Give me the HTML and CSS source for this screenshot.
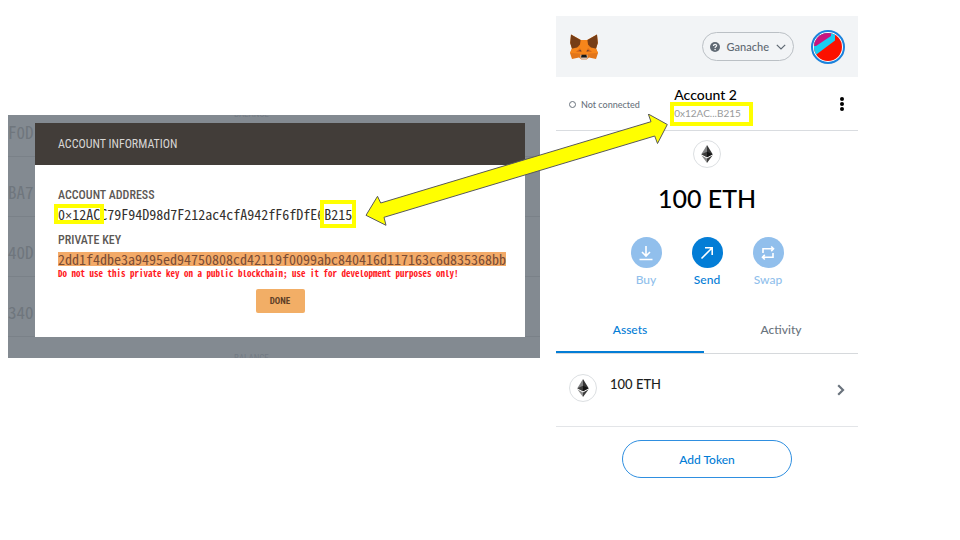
FILE: index.html
```
<!DOCTYPE html>
<html lang="en">
<head>
<meta charset="utf-8">
<meta name="viewport" content="width=device-width, initial-scale=1">
<title>Import Ganache account</title>
<link rel="stylesheet" href="styles.css">
</head>
<body>
<main class="stage">
  <section class="ganache">
    <div class="accounts">
      <div class="account"><span class="balance">BALANCE</span><span class="hash">F0D</span></div>
      <div class="account"><span class="hash">BA7</span></div>
      <div class="account"><span class="hash">40D</span></div>
      <div class="account"><span class="hash">340</span></div>
      <div class="account"><span class="balance">BALANCE</span></div>
    </div>
    <div class="modal">
      <h1 class="modal-title">ACCOUNT INFORMATION</h1>
      <div class="modal-body">
        <h2 class="label">ACCOUNT ADDRESS</h2>
        <p class="address"><span class="mark mark-start">0<span class="times">×</span>12AC</span>C79F94D98d7F212ac4cfA942fF6fDfE6<span class="mark mark-end">B215</span></p>
        <h2 class="label">PRIVATE KEY</h2>
        <p class="key"><span class="selected">2dd1f4dbe3a9495ed94750808cd42119f0099abc840416d117163c6d835368bb</span></p>
        <p class="warning">Do not use this private key on a public blockchain; use it for development purposes only!</p>
        <button class="done" type="button">DONE</button>
      </div>
    </div>
  </section>

  <section class="wallet">
    <header class="wallet-header">
      <svg class="fox" viewBox="0 0 28 26" aria-hidden="true">
        <path fill="#e2761b" d="M1 .5 11 6h6L27 .5l.8 8.500-1.600 5.500L28 19l-2 6-7-1.500-2.500 2h-5L9 23.500 2 25l-2-6 1.800-4.500L.2 9z"/>
        <path fill="#f6851b" d="M11 6h6l2 7 7 2 2 4-9 .5-2 1h-6l-2-1-9-.5 2-4 7-2z"/>
        <path fill="#763d16" d="M1 .5 10.500 6 10 10.500l-3 3-5 1L.2 9zM27 .5 17.500 6l.5 4.500 3 3 5 1L27.800 9z"/>
        <path fill="#d9691a" d="m6 18 4-4 1.500 4zM22 18l-4-4-1.500 4z"/>
        <path fill="#7d4a2c" d="m8.500 16.500 2.500-.8.4 2zM19.500 16.500l-2.500-.8-.4 2z"/>
        <path fill="#d7c1b3" d="m10.500 20.500 1 .5h5l1-.5v3.500l-1.500 1.500h-4L10.500 24z"/>
        <path fill="#161616" d="M11.600 20.800h4.800l.6 2.700h-6z"/>
      </svg>
      <button class="network" type="button">
        <svg class="help" viewBox="0 0 10 10" aria-hidden="true"><circle cx="5" cy="5" r="5" fill="#5f6973"/><path d="M3.500 3.900c0-2 3.200-1.900 3.100-.1 0 1-1.500 1-1.500 2.100" fill="none" stroke="#f2f4f6" stroke-width="1.300"/><circle cx="5.100" cy="7.600" r=".8" fill="#f2f4f6"/></svg>
        <span>Ganache</span>
        <svg class="caret" viewBox="0 0 10 6" aria-hidden="true"><path d="m.8.8 4.200 4.200L9.200.8" fill="none" stroke="#5f6973" stroke-width="1.200"/></svg>
      </button>
      <button class="avatar" type="button" aria-label="My accounts">
        <svg viewBox="0 0 28 28" aria-hidden="true">
          <clipPath id="disc"><circle cx="14" cy="14" r="14"/></clipPath>
          <g clip-path="url(#disc)"><path fill="#fb1100" d="M0 0h28v28H0z"/><path fill="#18cdf2" d="M0 0h21v7.500L3 21l-3 2z"/><path fill="#c8147f" d="M0 0h17v3L2 13H0z"/></g>
        </svg>
      </button>
    </header>

    <div class="identity">
      <span class="status"><i class="dot"></i>Not connected</span>
      <div class="who">
        <strong class="name">Account 2</strong>
        <span class="short mark">0x12AC...B215</span>
      </div>
      <button class="more" type="button" aria-label="Account options">
        <svg viewBox="0 0 4 14" aria-hidden="true"><circle cx="2" cy="2" r="2"/><circle cx="2" cy="7" r="2"/><circle cx="2" cy="12" r="2"/></svg>
      </button>
    </div>

    <div class="overview">
      <span class="coin"><svg viewBox="0 0 12 19" aria-hidden="true"><path fill="#828384" d="M6 0 0 9.700 6 13z"/><path fill="#343434" d="m6 0 6 9.700L6 13z"/><path fill="#3c3c3b" d="m0 9.700 6-2.500V13zM6 14.200l6-3.300L6 19z"/><path fill="#141414" d="m12 9.700-6-2.500V13z"/><path fill="#8c8c8c" d="M0 10.900 6 14.200V19z"/></svg></span>
      <p class="total">100 ETH</p>
      <div class="actions">
        <button class="action off" type="button"><span class="round"><svg viewBox="0 0 16 16" aria-hidden="true"><path d="M8 1v9.500M4 7l4 4 4-4M1.500 14.500h13"/></svg></span>Buy</button>
        <button class="action" type="button"><span class="round"><svg viewBox="0 0 16 16" aria-hidden="true"><path d="M2.500 13.500 13 3M6 2.800h7.200V10"/></svg></span>Send</button>
        <button class="action off" type="button"><span class="round"><svg viewBox="0 0 16 16" aria-hidden="true"><path d="M3 8V3.800h10.500M11.200 1.500l2.300 2.300-2.300 2.300M13 8v4.200H2.500M4.800 9.900l-2.300 2.300 2.300 2.300"/></svg></span>Swap</button>
      </div>
    </div>

    <nav class="tabs">
      <button class="tab current" type="button">Assets</button>
      <button class="tab" type="button">Activity</button>
    </nav>

    <div class="asset">
      <span class="coin"><svg viewBox="0 0 12 19" aria-hidden="true"><path fill="#828384" d="M6 0 0 9.700 6 13z"/><path fill="#343434" d="m6 0 6 9.700L6 13z"/><path fill="#3c3c3b" d="m0 9.700 6-2.500V13zM6 14.200l6-3.300L6 19z"/><path fill="#141414" d="m12 9.700-6-2.500V13z"/><path fill="#8c8c8c" d="M0 10.900 6 14.200V19z"/></svg></span>
      <span class="amount">100 ETH</span>
      <svg class="chevron" viewBox="0 0 8 12" aria-hidden="true"><path d="m1.200 1.200 4.800 4.800-4.800 4.800" fill="none" stroke="#6a737d" stroke-width="2.200"/></svg>
    </div>

    <button class="add" type="button">Add Token</button>
  </section>

  <svg class="arrow" viewBox="0 0 304 114" aria-hidden="true">
    <path d="m1 101.300 11.500-19L15.700 89 286 7.700 283.300 0l19 10.500-9.800 19-2.800-7.500L19 103.300l2 8z" fill="#ff0" stroke="#595959"/>
  </svg>
</main>
</body>
</html>
```
FILE: styles.css
```
* {
  box-sizing: border-box;
}

body,
h1,
h2,
p {
  margin: 0;
}

body {
  background: #fff;
  font-family: Lato, "Liberation Sans", sans-serif;
}

button {
  padding: 0;
  border: 0;
  background: none;
  color: inherit;
  font: inherit;
  cursor: pointer;
}

svg {
  display: block;
}

.stage {
  position: relative;
  display: grid;
  grid-template-columns: 532fr 302fr;
  column-gap: 16px;
  align-items: start;
  padding: 16px 102px 16px 8px;
}

/* Ganache window */

.ganache {
  position: relative;
  margin-top: 99px;
  padding: 8px 15px 21px 27px;
  overflow: hidden;
  background: #838a91;
  font-family: "Noto Sans Mono CJK JP", "DejaVu Sans Mono", monospace;
  font-variant-numeric: slashed-zero;
}

.accounts {
  position: absolute;
  inset: -18px 0 auto;
  color: #6f767d;
}

.account {
  display: flex;
  flex-direction: column;
  justify-content: flex-end;
  height: 60px;
  padding-bottom: 12px;
  border-bottom: 1px solid #7a8188;
}

.account:last-child {
  justify-content: flex-start;
  padding-top: 15px;
}

.balance {
  margin-left: 226px;
  color: #737b84;
  font: 9px/12px "Roboto Condensed", Roboto, sans-serif;
}

.hash {
  font-size: 17px;
  line-height: 24px;
}

.modal {
  position: relative;
  background: #fff;
}

.modal-title {
  padding: 0 23px;
  background: #423d39;
  color: #d8d6d4;
  font: 400 12px/42px "Roboto Condensed", Roboto, sans-serif;
}

.modal-body {
  padding: 22px 23px 24px;
}

.label {
  color: #5c5855;
  font: 500 12px/17px "Roboto Condensed", Roboto, sans-serif;
}

.address,
.key {
  color: #33302e;
  font-size: 14px;
  line-height: 20px;
  white-space: nowrap;
}

.address {
  margin-bottom: 5px;
}

.times {
  font-size: 12px;
  font-family: "Liberation Mono", monospace;
}

.selected {
  display: inline-block;
  background: #f3aa68;
  color: #7b4d35;
  line-height: 14px;
}

.warning {
  color: #ff1a24;
  font-size: 9px;
  font-weight: 700;
  line-height: 10px;
  white-space: nowrap;
}

.done {
  display: block;
  width: 49px;
  height: 24px;
  margin: 10px auto 0;
  border-radius: 2px;
  background: #f2ae66;
  color: #5f3f28;
  font: 700 9px/24px "Roboto Condensed", Roboto, sans-serif;
}

/* Yellow highlight frames */

.mark {
  position: relative;
}

.mark::after {
  content: "";
  position: absolute;
  inset: 0 -4px;
  border: 4px solid #ff0;
}

.mark-end::after {
  inset: -4px -4px;
}

/* Wallet popup */

.wallet {
  display: flex;
  flex-direction: column;
}

.wallet-header {
  display: flex;
  align-items: center;
  height: 61px;
  padding: 0 13px 0 14px;
  background: #f2f4f6;
}

.fox {
  width: 28px;
  height: 26px;
}

.network {
  display: flex;
  align-items: center;
  gap: 7px;
  height: 29px;
  margin-left: auto;
  padding: 0 7px;
  border: 1px solid #bbc0c5;
  border-radius: 15px;
  color: #5f6973;
  font-size: 11px;
  font-weight: 500;
}

.help {
  width: 10px;
  height: 10px;
}

.caret {
  width: 10px;
  height: 6px;
}

.avatar {
  width: 34px;
  height: 34px;
  margin-left: 17px;
  padding: 1px;
  border: 2px solid #1b82dc;
  border-radius: 50%;
  background: #fff;
}

.identity {
  display: grid;
  grid-template-columns: 1fr auto 1fr;
  align-items: center;
  height: 54px;
  padding: 1px 12px 0 13px;
  border-bottom: 1px solid #d9dce0;
}

.status {
  display: flex;
  align-items: center;
  gap: 5px;
  color: #6a737d;
  font-size: 9px;
  font-weight: 500;
}

.dot {
  width: 7px;
  height: 7px;
  border: 1px solid #6a737d;
  border-radius: 50%;
}

.who {
  display: flex;
  flex-direction: column;
  align-items: flex-start;
}

.name {
  color: #000;
  font-size: 14px;
  font-weight: 500;
  line-height: 18px;
}

.short {
  color: #989a9b;
  font-size: 10px;
  line-height: 18px;
}

.short::after {
  inset: -2px -12px -4px -4px;
}

.more {
  justify-self: end;
  width: 6px;
}

.more svg {
  width: 4px;
  height: 14px;
}

.overview {
  display: flex;
  flex-direction: column;
  align-items: center;
  padding-top: 9px;
}

.coin {
  display: grid;
  place-items: center;
  width: 28px;
  height: 28px;
  border: 1px solid #dcdfe2;
  border-radius: 50%;
}

.coin svg {
  width: 12px;
  height: 18px;
}

.total {
  margin-top: 12px;
  color: #000;
  font-size: 25px;
  font-weight: 500;
  line-height: 36px;
}

.actions {
  display: flex;
  gap: 19px;
  margin-top: 21px;
}

.action {
  display: flex;
  flex-direction: column;
  align-items: center;
  width: 42px;
  color: #037dd6;
  font-size: 12px;
  font-weight: 500;
  line-height: 24px;
}

.off {
  color: #91bfec;
}

.round {
  display: grid;
  place-items: center;
  width: 31px;
  height: 31px;
  border-radius: 50%;
  background: currentColor;
}

.round svg {
  width: 16px;
  height: 16px;
  fill: none;
  stroke: #fff;
  stroke-width: 1.600;
}

.tabs {
  display: flex;
  margin-top: 16px;
  border-bottom: 1px solid #d6d9dc;
}

.tab {
  flex: 1;
  height: 45px;
  border-bottom: 2px solid transparent;
  color: #6a737d;
  font-size: 12px;
  font-weight: 500;
}

.current {
  flex: 0 0 49%;
  border-bottom-color: #037dd6;
  color: #037dd6;
}

.asset {
  display: flex;
  align-items: center;
  height: 73px;
  padding: 0 13px;
  border-bottom: 1px solid #e3e5e8;
}

.asset .coin {
  margin-bottom: 5px;
}

.amount {
  margin: 0 auto 12px 13px;
  color: #1c1e20;
  font-size: 13px;
  font-weight: 500;
}

.chevron {
  width: 8px;
  height: 12px;
}

.add {
  align-self: center;
  width: 56%;
  height: 38px;
  margin-top: 13px;
  border: 1px solid #2f8fe0;
  border-radius: 19px;
  color: #037dd6;
  font-size: 12px;
  font-weight: 500;
}

/* Arrow joining the two addresses */

.arrow {
  position: absolute;
  top: 114px;
  left: 365px;
  width: 304px;
  height: 114px;
  pointer-events: none;
}
```
